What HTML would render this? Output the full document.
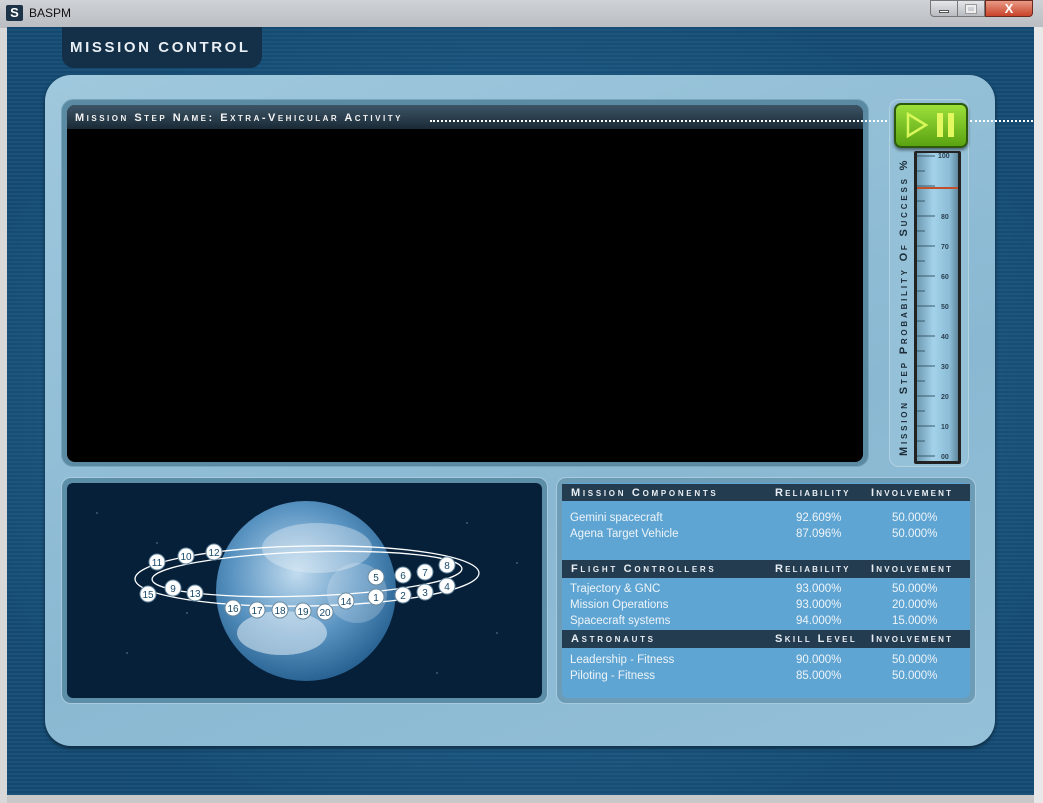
<!DOCTYPE html>
<html><head><meta charset="utf-8"><style>
*{margin:0;padding:0;box-sizing:border-box}
body{width:1043px;height:803px;overflow:hidden;background:#d8d8d8;font-family:"Liberation Sans",sans-serif;position:relative}
.abs{position:absolute}
.sc{font-variant:small-caps;letter-spacing:2.7px;font-weight:bold}
</style></head><body>
<div class="abs" style="left:0;top:0;width:1043px;height:28px;background:linear-gradient(#cfd2d6,#b9bdc2)"></div>
<div class="abs" style="left:6px;top:5px;width:17px;height:16px;background:#1d3348;border-radius:2px;color:#fff;font-size:13px;font-weight:bold;line-height:16px;text-align:center">S</div>
<div class="abs" style="left:29px;top:6px;font-size:12px;color:#111">BASPM</div>
<div class="abs" style="left:930px;top:0;width:28px;height:17px;background:linear-gradient(#e4e6e9,#b7bbc0);border:1px solid #777;border-radius:0 0 0 4px"><div style="margin:9px auto 0;width:10px;height:3px;background:#fff;border:1px solid #555"></div></div>
<div class="abs" style="left:957px;top:0;width:28px;height:17px;background:linear-gradient(#e4e6e9,#b7bbc0);border:1px solid #777"><div style="margin:4px auto 0;width:10px;height:8px;border:2px solid #eee;outline:1px solid #999"></div></div>
<div class="abs" style="left:985px;top:0;width:48px;height:17px;background:linear-gradient(#e89a85,#c8432a);border:1px solid #6a2a20;border-radius:0 0 4px 0;color:#fff;font-weight:bold;font-size:13px;text-align:center;line-height:15px">X</div>
<div class="abs" style="left:7px;top:27px;width:1027px;height:769px;background:repeating-linear-gradient(#1c5a85 0 2px,#226895 2px 4px);"></div>
<div class="abs" style="left:7px;top:27px;width:1027px;height:769px;background:radial-gradient(ellipse at 50% 50%,rgba(60,140,190,.35),rgba(10,40,70,.35) 80%)"></div>
<div class="abs" style="left:7px;top:795px;width:1027px;height:8px;background:#c8c8c8"></div>
<div class="abs" style="left:1034px;top:27px;width:9px;height:776px;background:#e8e8e8"></div>
<div class="abs" style="left:62px;top:27px;width:200px;height:41px;background:#133048;border-radius:0 0 12px 12px;color:#e8eef4;font-size:15px;font-weight:bold;letter-spacing:2.6px;padding:12px 0 0 8px">MISSION CONTROL</div>
<div class="abs" style="left:45px;top:75px;width:950px;height:671px;background:linear-gradient(160deg,#9fc8dd,#8ab8d2 60%,#94c0d8);border-radius:26px;box-shadow:0 2px 4px rgba(0,0,0,.5)"></div>
<div class="abs" style="left:61px;top:99px;width:808px;height:368px;background:#5b8aa3;border-radius:12px;border:1px solid #7aa6bd"></div>
<div class="abs" style="left:67px;top:105px;width:796px;height:357px;background:#000;border-radius:8px"></div>
<div class="abs" style="left:67px;top:105px;width:796px;height:24px;background:linear-gradient(#3d5566,#1a2a36);border-radius:8px 8px 0 0"></div>
<div class="abs sc" style="left:75px;top:112px;font-size:11px;color:#f2f2f2;letter-spacing:2.5px;white-space:nowrap">Mission Step Name: Extra-Vehicular Activity</div>
<div class="abs" style="left:430px;top:120px;width:465px;border-top:2px dotted #fff"></div>
<div class="abs" style="left:970px;top:120px;width:63px;border-top:2px dotted #fff"></div>
<div class="abs" style="left:889px;top:99px;width:80px;height:368px;border:1px solid #b2d2e2;border-radius:10px;background:#95c1d8"></div>
<div class="abs" style="left:894px;top:103px;width:74px;height:45px;background:linear-gradient(#9ce03a,#5aa312);border:2px solid #2d5a0c;border-radius:7px;box-shadow:0 2px 3px rgba(0,0,0,.5)"></div>
<svg class="abs" style="left:894px;top:103px" width="74" height="45"><polygon points="14,11 14,33 32,22" fill="none" stroke="#d8f75a" stroke-width="2.5"/><rect x="43" y="10" width="6" height="24" fill="#e2f85e"/><rect x="54" y="10" width="6" height="24" fill="#e2f85e"/></svg>
<div class="abs" style="left:914px;top:151px;width:47px;height:313px;background:#222;border-radius:2px"></div>
<div class="abs" style="left:917px;top:153px;width:41px;height:308px;background:linear-gradient(90deg,#6e9ab2,#a3d2ea 40%,#8cbcd6 80%,#5f889e)"></div>
<svg class="abs" style="left:917px;top:150px" width="44" height="315" font-family="Liberation Sans" font-size="7" font-weight="bold" fill="#2a4050">
<g stroke="#3a5a6a" stroke-width="1">
<line x1="0" y1="6" x2="18" y2="6"/><line x1="0" y1="36" x2="18" y2="36"/><line x1="0" y1="66" x2="18" y2="66"/><line x1="0" y1="96" x2="18" y2="96"/><line x1="0" y1="126" x2="18" y2="126"/><line x1="0" y1="156" x2="18" y2="156"/><line x1="0" y1="186" x2="18" y2="186"/><line x1="0" y1="216" x2="18" y2="216"/><line x1="0" y1="246" x2="18" y2="246"/><line x1="0" y1="276" x2="18" y2="276"/><line x1="0" y1="306" x2="18" y2="306"/>
<line x1="0" y1="21" x2="8" y2="21"/><line x1="0" y1="51" x2="8" y2="51"/><line x1="0" y1="81" x2="8" y2="81"/><line x1="0" y1="111" x2="8" y2="111"/><line x1="0" y1="141" x2="8" y2="141"/><line x1="0" y1="171" x2="8" y2="171"/><line x1="0" y1="201" x2="8" y2="201"/><line x1="0" y1="231" x2="8" y2="231"/><line x1="0" y1="261" x2="8" y2="261"/><line x1="0" y1="291" x2="8" y2="291"/>
</g>
<text x="21" y="8">100</text><text x="24" y="69">80</text><text x="24" y="99">70</text><text x="24" y="129">60</text><text x="24" y="159">50</text><text x="24" y="189">40</text><text x="24" y="219">30</text><text x="24" y="249">20</text><text x="24" y="279">10</text><text x="24" y="309">00</text>
<rect x="0" y="37" width="41" height="2" fill="#c0502a"/>
</svg>
<div class="abs sc" style="left:898px;top:456px;transform:rotate(-90deg);transform-origin:0 0;font-size:11px;color:#1c2c38;white-space:nowrap;letter-spacing:2.8px">Mission Step Probability Of Success %</div>
<div class="abs" style="left:61px;top:477px;width:487px;height:227px;background:#5d8ea8;border-radius:10px;border:1px solid #a8cade"></div>
<div class="abs" style="left:67px;top:483px;width:475px;height:215px;background:#06203a;border-radius:6px"></div>
<svg class="abs" style="left:67px;top:483px" width="475" height="215">
<defs><radialGradient id="e" cx="45%" cy="40%" r="60%"><stop offset="0" stop-color="#c2dcef"/><stop offset=".6" stop-color="#5a94c2"/><stop offset="1" stop-color="#2a6494"/></radialGradient></defs>
<g fill="#fff" opacity=".5"><circle cx="30" cy="30" r=".7"/><circle cx="90" cy="60" r=".7"/><circle cx="400" cy="40" r=".7"/><circle cx="430" cy="150" r=".7"/><circle cx="60" cy="170" r=".7"/><circle cx="370" cy="190" r=".7"/><circle cx="120" cy="130" r=".7"/><circle cx="450" cy="80" r=".7"/></g>
<circle cx="239" cy="108" r="90" fill="url(#e)"/>
<ellipse cx="215" cy="150" rx="45" ry="22" fill="#e6f0f8" opacity=".55"/>
<ellipse cx="250" cy="65" rx="55" ry="25" fill="#e6f0f8" opacity=".4"/>
<ellipse cx="290" cy="110" rx="30" ry="30" fill="#e6f0f8" opacity=".25"/>
<g fill="none" stroke="#fff" stroke-width="1.3">
<ellipse cx="240" cy="93" rx="172" ry="30" transform="rotate(-1 240 93)"/>
<ellipse cx="240" cy="91" rx="155" ry="22" transform="rotate(-2 240 91)"/>
</g>
<g font-family="Liberation Sans" font-size="10" text-anchor="middle" fill="#1a4a6a">
<g fill="#fff" stroke="#6a8aa0" stroke-width="1">
<circle cx="90" cy="79" r="8"/><circle cx="119" cy="73" r="8"/><circle cx="147" cy="69" r="8"/><circle cx="106" cy="105" r="8"/><circle cx="128" cy="110" r="8"/><circle cx="81" cy="111" r="8"/><circle cx="166" cy="125" r="8"/><circle cx="190" cy="127" r="8"/><circle cx="213" cy="127" r="8"/><circle cx="236" cy="128" r="8"/><circle cx="258" cy="129" r="8"/><circle cx="279" cy="118" r="8"/><circle cx="309" cy="94" r="8"/><circle cx="336" cy="92" r="8"/><circle cx="358" cy="89" r="8"/><circle cx="380" cy="82" r="8"/><circle cx="309" cy="114" r="8"/><circle cx="336" cy="112" r="8"/><circle cx="358" cy="109" r="8"/><circle cx="380" cy="103" r="8"/>
</g>
<text x="90" y="83">11</text><text x="119" y="77">10</text><text x="147" y="73">12</text><text x="106" y="109">9</text><text x="128" y="114">13</text><text x="81" y="115">15</text><text x="166" y="129">16</text><text x="190" y="131">17</text><text x="213" y="131">18</text><text x="236" y="132">19</text><text x="258" y="133">20</text><text x="279" y="122">14</text><text x="309" y="98">5</text><text x="336" y="96">6</text><text x="358" y="93">7</text><text x="380" y="86">8</text><text x="309" y="118">1</text><text x="336" y="116">2</text><text x="358" y="113">3</text><text x="380" y="107">4</text>
</g>
</svg>
<div class="abs" style="left:556px;top:477px;width:420px;height:227px;background:#6d9cb7;border-radius:10px;border:1px solid #a8cade"></div>
<div class="abs" style="left:562px;top:483px;width:408px;height:215px;background:#5fa5d3;border-radius:6px"></div>
<div class="abs" style="left:562px;top:484px;width:408px;height:17px;background:#243c50"></div>
<div class="abs" style="left:562px;top:560px;width:408px;height:18px;background:#243c50"></div>
<div class="abs" style="left:562px;top:630px;width:408px;height:18px;background:#243c50"></div>
<div class="abs" style="left:0;top:0;font-size:11px;color:#e8eef4">
<div class="abs sc" style="left:571px;top:487px;white-space:nowrap">Mission Components</div>
<div class="abs sc" style="left:775px;top:487px;white-space:nowrap;letter-spacing:2.2px">Reliability</div>
<div class="abs sc" style="left:871px;top:487px;white-space:nowrap;letter-spacing:2.2px">Involvement</div>
<div class="abs sc" style="left:571px;top:563px;white-space:nowrap">Flight Controllers</div>
<div class="abs sc" style="left:775px;top:563px;white-space:nowrap;letter-spacing:2.2px">Reliability</div>
<div class="abs sc" style="left:871px;top:563px;white-space:nowrap;letter-spacing:2.2px">Involvement</div>
<div class="abs sc" style="left:571px;top:633px;white-space:nowrap">Astronauts</div>
<div class="abs sc" style="left:775px;top:633px;white-space:nowrap;letter-spacing:2.4px">Skill Level</div>
<div class="abs sc" style="left:871px;top:633px;white-space:nowrap;letter-spacing:2.2px">Involvement</div>
</div>
<div class="abs" style="left:570px;top:510px;font-size:11.5px;color:#eef4f8;line-height:16px">Gemini spacecraft<br>Agena Target Vehicle</div>
<div class="abs" style="left:796px;top:510px;font-size:11.5px;color:#eef4f8;line-height:16px">92.609%<br>87.096%</div>
<div class="abs" style="left:892px;top:510px;font-size:11.5px;color:#eef4f8;line-height:16px">50.000%<br>50.000%</div>
<div class="abs" style="left:570px;top:581px;font-size:11.5px;color:#eef4f8;line-height:16px">Trajectory &amp; GNC<br>Mission Operations<br>Spacecraft systems</div>
<div class="abs" style="left:796px;top:581px;font-size:11.5px;color:#eef4f8;line-height:16px">93.000%<br>93.000%<br>94.000%</div>
<div class="abs" style="left:892px;top:581px;font-size:11.5px;color:#eef4f8;line-height:16px">50.000%<br>20.000%<br>15.000%</div>
<div class="abs" style="left:570px;top:652px;font-size:11.5px;color:#eef4f8;line-height:16px">Leadership - Fitness<br>Piloting - Fitness</div>
<div class="abs" style="left:796px;top:652px;font-size:11.5px;color:#eef4f8;line-height:16px">90.000%<br>85.000%</div>
<div class="abs" style="left:892px;top:652px;font-size:11.5px;color:#eef4f8;line-height:16px">50.000%<br>50.000%</div>
</body></html>
